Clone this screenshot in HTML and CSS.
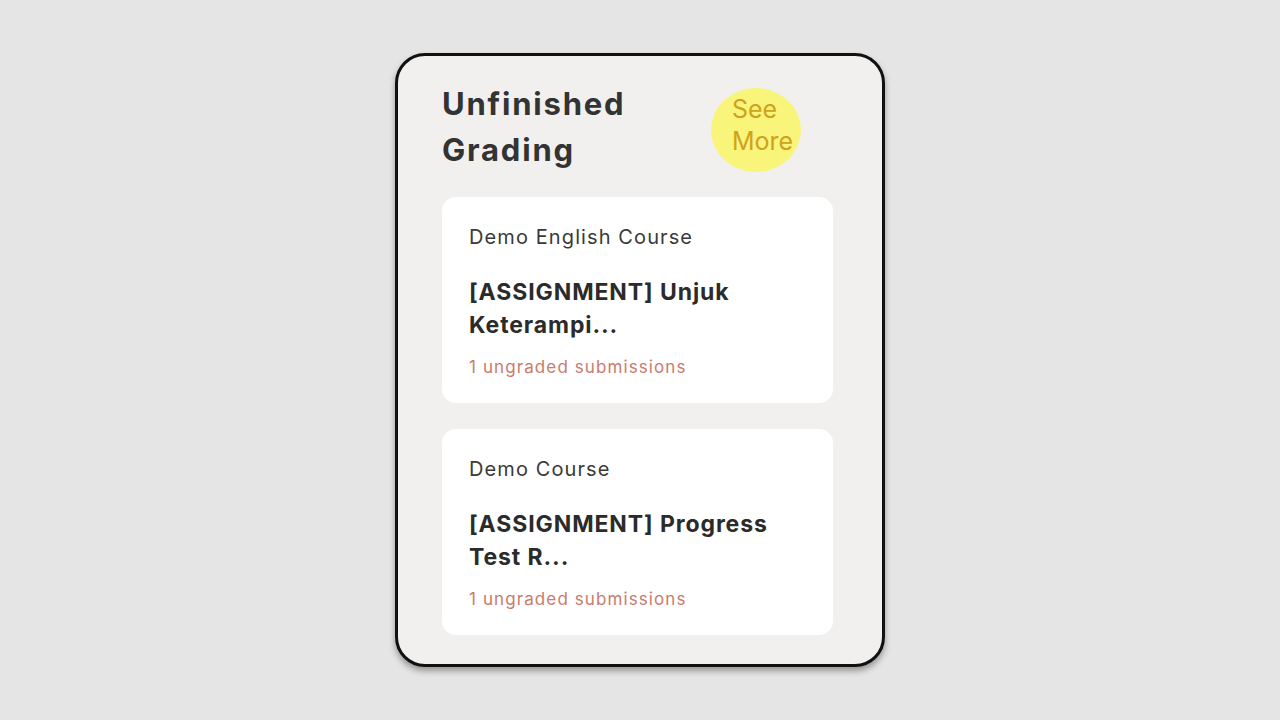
FILE: index.html
```html
<!DOCTYPE html>
<html>
<head>
<meta charset="utf-8">
<link rel="stylesheet" href="styles.css">
</head>
<body>
<div class="page">
  <section class="panel">
    <header class="panel-head">
      <h1 class="panel-title">Unfinished<br>Grading</h1>
      <a class="see-more">See<br>More</a>
    </header>
    <div class="list">
      <article class="item">
        <div class="course">Demo English Course</div>
        <div class="assignment">[ASSIGNMENT] Unjuk Keterampi...</div>
        <div class="count">1 ungraded submissions</div>
      </article>
      <article class="item">
        <div class="course">Demo Course</div>
        <div class="assignment">[ASSIGNMENT] Progress Test R...</div>
        <div class="count">1 ungraded submissions</div>
      </article>
    </div>
  </section>
</div>
</body>
</html>
```
FILE: styles.css
```css
html, body {
  margin: 0;
  padding: 0;
}
body {
  background: #e5e5e5;
  font-family: Inter, "Noto Sans", sans-serif;
  width: 1280px;
  height: 720px;
  overflow: hidden;
}
.page {
  display: flex;
  justify-content: center;
  padding-top: 53px;
}
.panel {
  box-sizing: border-box;
  width: 490px;
  height: 614px;
  background: #f1f0ef;
  border: 3px solid #111;
  border-radius: 30px;
  box-shadow: 0 4px 6px rgba(0,0,0,0.35);
  padding: 25px 49px 0 44px;
  display: flex;
  flex-direction: column;
}
.panel-head {
  display: flex;
  align-items: flex-start;
  height: 92px;
  margin-bottom: 24px;
}
.panel-title {
  flex: 0 0 269px;
  margin: 0;
  font-size: 31px;
  line-height: 46px;
  font-weight: 700;
  color: #333;
  letter-spacing: 1.8px;
}
.see-more {
  box-sizing: border-box;
  width: 90px;
  height: 84px;
  margin-top: 7px;
  border-radius: 50%;
  background: #f8f57a;
  color: #d0a21c;
  font-size: 25px;
  line-height: 32px;
  padding: 5px 0 0 21px;
}
.list {
  display: flex;
  flex-direction: column;
  gap: 26px;
}
.item {
  box-sizing: border-box;
  height: 206px;
  background: #fff;
  border-radius: 14px;
  padding: 25px 27px 0 27px;
}
.course {
  font-size: 20px;
  line-height: 30px;
  color: #3a3a3a;
  letter-spacing: 1.1px;
}
.assignment {
  margin-top: 24px;
  font-size: 23px;
  line-height: 33px;
  font-weight: 700;
  color: #2b2b2b;
  letter-spacing: 0.9px;
}
.count {
  margin-top: 14px;
  font-size: 17px;
  line-height: 22px;
  color: #c97b6c;
  letter-spacing: 1.1px;
}
```
